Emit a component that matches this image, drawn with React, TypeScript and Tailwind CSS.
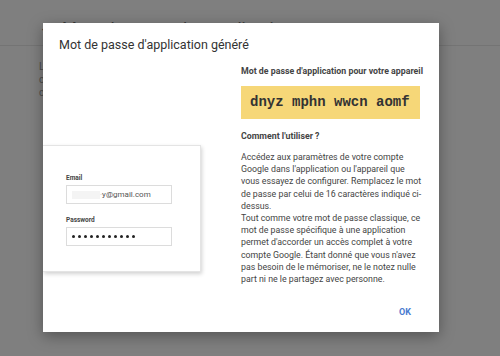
export default function App() {
  const dots = Array.from({ length: 11 });

  return (
    <div className="relative h-[356px] w-[500px] overflow-hidden bg-[#7f7f7f] font-['Roboto',sans-serif]">
      {/* Page behind the overlay */}
      <header className="flex h-[46px] items-start gap-[8px] border-b border-[#747474] pl-[39px] pt-[20px] text-[#3a3a3a]">
        <span className="text-[15px] leading-none">←</span>
        <span className="text-[17px] leading-none">Mots de passe des applications</span>
      </header>
      <div className="pl-[39px] pt-[14px] text-[10px] leading-[13px] text-[#4d4d4d]">
        <p>Les mots de passe d'application</p>
        <p>compte Google à partir</p>
        <p>compatibles avec la</p>
      </div>

      {/* Dialog */}
      <div className="absolute left-[43px] top-[23px] flex h-[309px] w-[396px] flex-col overflow-hidden bg-white shadow-[0_4px_14px_rgba(0,0,0,0.35)]">
        <h1 className="px-[16px] pt-[14px] text-[12.5px] leading-[15px] text-[#333]">
          Mot de passe d'application généré
        </h1>

        <div className="mt-[13px] flex">
          {/* Illustration */}
          <div className="w-[198px] shrink-0 pt-[80px]">
            <div className="h-[127px] w-[158px] border border-l-0 border-[#e4e4e4] bg-white pl-[23px] pt-[28px] shadow-[1px_2px_4px_rgba(0,0,0,0.18)]">
              <p className="text-[6.5px] font-bold leading-[8px] text-[#444]">Email</p>
              <div className="mt-[3px] flex h-[19px] w-[106px] items-center border border-[#dcdcdc] pl-[5px] text-[8px] text-[#555]">
                <span className="h-[8px] w-[28px] bg-[#f4f4f4]" />
                <span className="text-[#c4c4c4]">·</span>
                <span>y@gmail.com</span>
              </div>
              <p className="mt-[12px] text-[6.5px] font-bold leading-[8px] text-[#444]">Password</p>
              <div className="mt-[3px] flex h-[19px] w-[106px] items-center gap-[2.6px] border border-[#dcdcdc] pl-[5px]">
                {dots.map((_, i) => (
                  <span key={i} className="h-[3.4px] w-[3.4px] rounded-full bg-[#222]" />
                ))}
              </div>
            </div>
          </div>

          {/* Instructions */}
          <div className="w-[190px]">
            <h2 className="whitespace-nowrap text-[8.8px] font-bold leading-[12px] text-[#444]">
              Mot de passe d'application pour votre appareil
            </h2>
            <div className="mt-[9px] h-[33px] w-[179px] bg-[#f6d778] pl-[9px] font-['Liberation_Mono',monospace] text-[14px] font-bold leading-[33px] text-[#333]">
              dnyz mphn wwcn aomf
            </div>
            <h3 className="mt-[11px] text-[8.8px] font-bold leading-[12px] text-[#444]">
              Comment l'utiliser ?
            </h3>
            <p className="mt-[9px] whitespace-nowrap text-[8.8px] leading-[12.2px] text-[#444]">
              Accédez aux paramètres de votre compte
              <br />
              Google dans l'application ou l'appareil que
              <br />
              vous essayez de configurer. Remplacez le mot
              <br />
              de passe par celui de 16 caractères indiqué ci-
              <br />
              dessus.
              <br />
              Tout comme votre mot de passe classique, ce
              <br />
              mot de passe spécifique à une application
              <br />
              permet d'accorder un accès complet à votre
              <br />
              compte Google. Étant donné que vous n'avez
              <br />
              pas besoin de le mémoriser, ne le notez nulle
              <br />
              part ni ne le partagez avec personne.
            </p>
          </div>
        </div>

        <div className="mt-auto flex justify-end pb-[14px] pr-[28px]">
          <button className="text-[9px] font-bold leading-[12px] text-[#4a7bd0]">OK</button>
        </div>
      </div>
    </div>
  );
}
